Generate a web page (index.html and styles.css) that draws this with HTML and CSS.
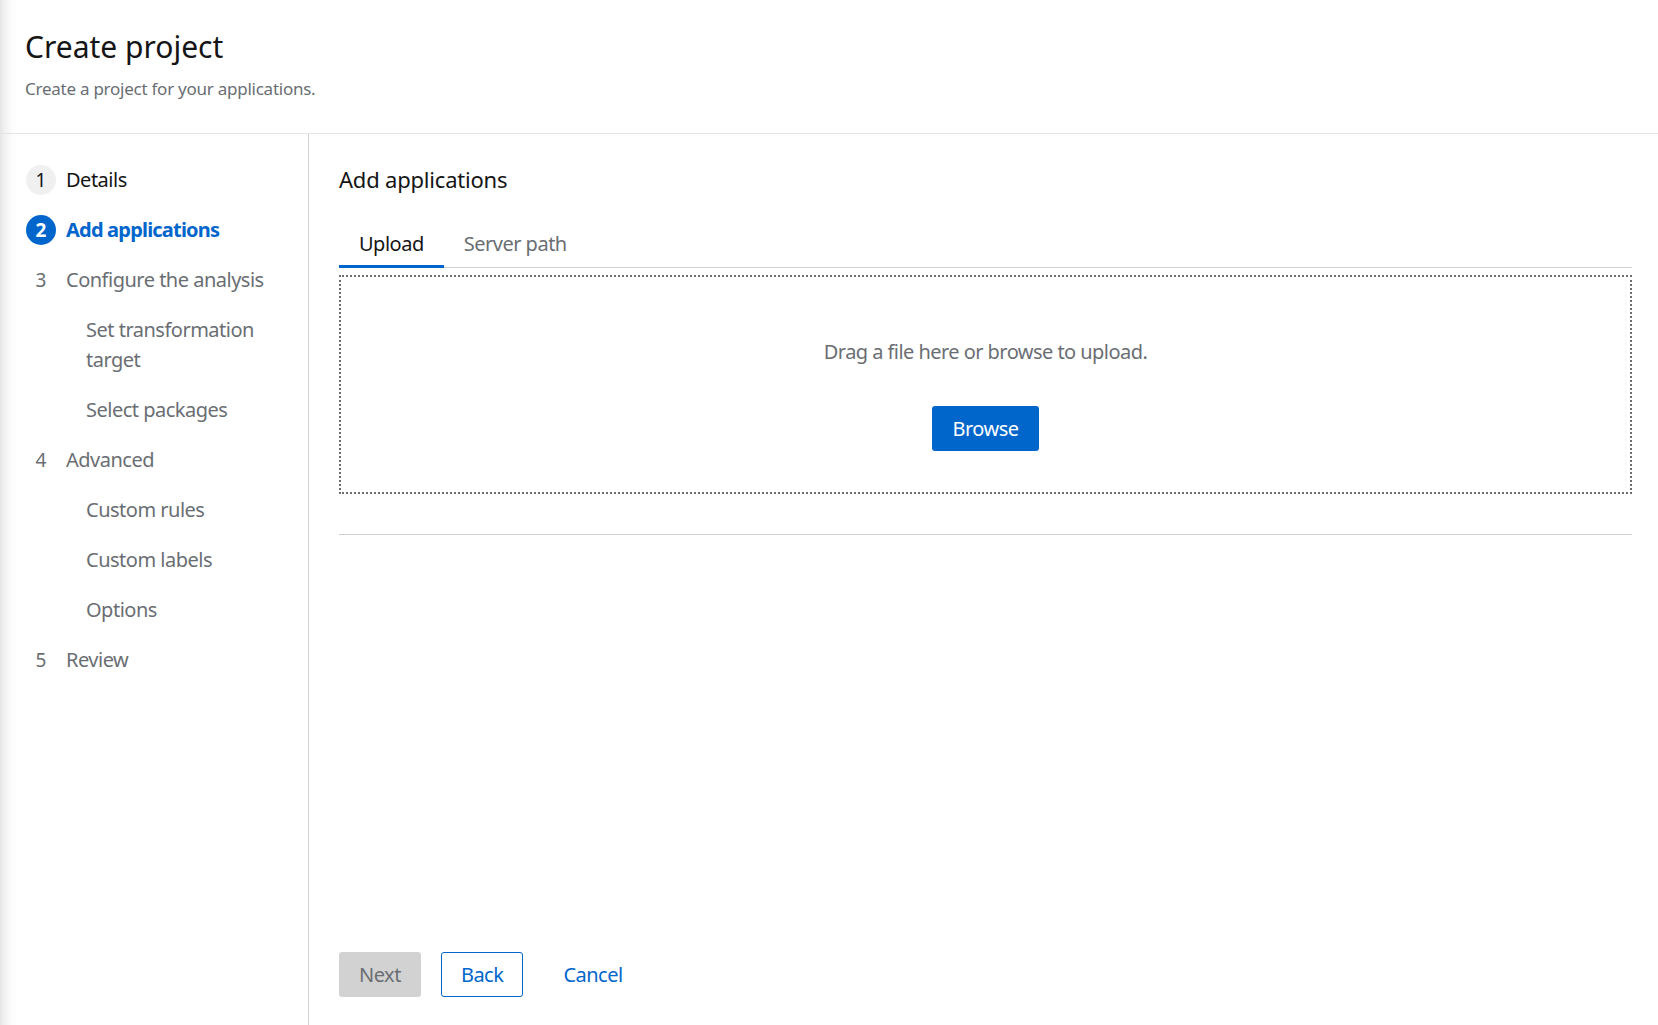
FILE: index.html
```html
<!DOCTYPE html>
<html lang="en">
<head>
<meta charset="utf-8">
<title>Create project</title>
<link rel="stylesheet" href="styles.css">
</head>
<body>
<div class="page">
  <header class="header">
    <h1 class="title">Create project</h1>
    <p class="subtitle">Create a project for your applications.</p>
  </header>
  <div class="wizard">
    <nav class="sidebar">
      <ol class="steps">
        <li class="step done"><span class="num">1</span><span class="label">Details</span></li>
        <li class="step current"><span class="num">2</span><span class="label">Add applications</span></li>
        <li class="step"><span class="num">3</span><span class="label">Configure the analysis</span></li>
        <li class="substep">Set transformation target</li>
        <li class="substep">Select packages</li>
        <li class="step"><span class="num">4</span><span class="label">Advanced</span></li>
        <li class="substep">Custom rules</li>
        <li class="substep">Custom labels</li>
        <li class="substep">Options</li>
        <li class="step"><span class="num">5</span><span class="label">Review</span></li>
      </ol>
    </nav>
    <main class="main">
      <h2 class="heading">Add applications</h2>
      <div class="tabs">
        <button class="tab active">Upload</button>
        <button class="tab">Server path</button>
      </div>
      <div class="dropzone">
        <p class="drop-text">Drag a file here or browse to upload.</p>
        <button class="btn btn-primary">Browse</button>
      </div>
      <div class="separator"></div>
      <footer class="footer">
        <button class="btn btn-disabled">Next</button>
        <button class="btn btn-secondary">Back</button>
        <button class="btn btn-link">Cancel</button>
      </footer>
    </main>
  </div>
</div>
</body>
</html>
```

FILE: styles.css
```css
* { box-sizing: border-box; }

html, body {
  margin: 0;
  padding: 0;
  height: 100%;
}

body {
  font-family: "Noto Sans", "Open Sans", sans-serif;
  font-size: 20px;
  line-height: 30px;
  letter-spacing: -0.5px;
  color: #151515;
  background: #fff;
}

.page {
  display: flex;
  flex-direction: column;
  height: 100vh;
  background: linear-gradient(90deg, #e6e6e6 0, #f2f2f2 5px, #fbfbfb 11px, #fff 17px);
}

.header {
  padding: 27px 24px 29px 25px;
  border-bottom: 1px solid #e4e4e4;
}

.title {
  margin: 0 0 8px;
  font-size: 30px;
  line-height: 39px;
  font-weight: 400;
  letter-spacing: 0;
}

.subtitle {
  margin: 0;
  font-size: 17px;
  letter-spacing: -0.25px;
  color: #6a6e73;
}

.wizard {
  flex: 1;
  display: flex;
  min-height: 0;
}

.sidebar {
  width: 309px;
  flex-shrink: 0;
  border-right: 1px solid #d2d2d2;
  padding: 21px 24px 0 26px;
}

.steps {
  list-style: none;
  margin: 0;
  padding: 0;
}

.step {
  display: flex;
  align-items: flex-start;
  gap: 10px;
  padding: 10px 0;
  color: #6a6e73;
}

.num {
  width: 30px;
  height: 30px;
  flex-shrink: 0;
  border-radius: 50%;
  text-align: center;
  font-size: 19px;
  letter-spacing: 0;
}

.step.done { color: #151515; }
.step.done .num { background: #f0f0f0; }

.step.current { color: #06c; font-weight: 700; letter-spacing: -0.8px; }
.step.current .num { background: #06c; color: #fff; letter-spacing: 0; }

.substep {
  padding: 10px 0 10px 60px;
  color: #6a6e73;
  max-width: 250px;
}

.main {
  flex: 1;
  display: flex;
  flex-direction: column;
  padding: 30px 26px 28px 30px;
  min-width: 0;
}

.heading {
  margin: 0 0 22px;
  font-size: 22px;
  line-height: 30px;
  font-weight: 400;
  letter-spacing: -0.2px;
}

.tabs {
  display: flex;
  border-bottom: 1px solid #d2d2d2;
}

.tab {
  font: inherit;
  letter-spacing: inherit;
  background: none;
  border: 0;
  border-bottom: 3px solid transparent;
  margin-bottom: -1px;
  padding: 13px 20px 6px;
  color: #6a6e73;
  cursor: pointer;
}

.tab.active {
  color: #151515;
  border-bottom-color: #06c;
}

.dropzone {
  margin-top: 7px;
  border: 2px dotted #6a6e73;
  padding: 60px 20px 41px;
  display: flex;
  flex-direction: column;
  align-items: center;
}

.drop-text {
  margin: 0 0 39px;
  color: #6a6e73;
  letter-spacing: -0.55px;
}

.btn {
  font: inherit;
  letter-spacing: inherit;
  height: 45px;
  padding: 7px 20px;
  border-radius: 3px;
  border: 0;
  cursor: pointer;
}

.btn-primary {
  background: #06c;
  color: #fff;
}

.separator {
  margin-top: 40px;
  border-top: 1px solid #d2d2d2;
}

.footer {
  margin-top: auto;
  display: flex;
  gap: 20px;
}

.btn-disabled {
  background: #d2d2d2;
  color: #6a6e73;
}

.btn-secondary {
  background: #fff;
  color: #06c;
  border: 1px solid #06c;
  padding: 7px 19px;
}

.btn-link {
  background: none;
  color: #06c;
}
```
